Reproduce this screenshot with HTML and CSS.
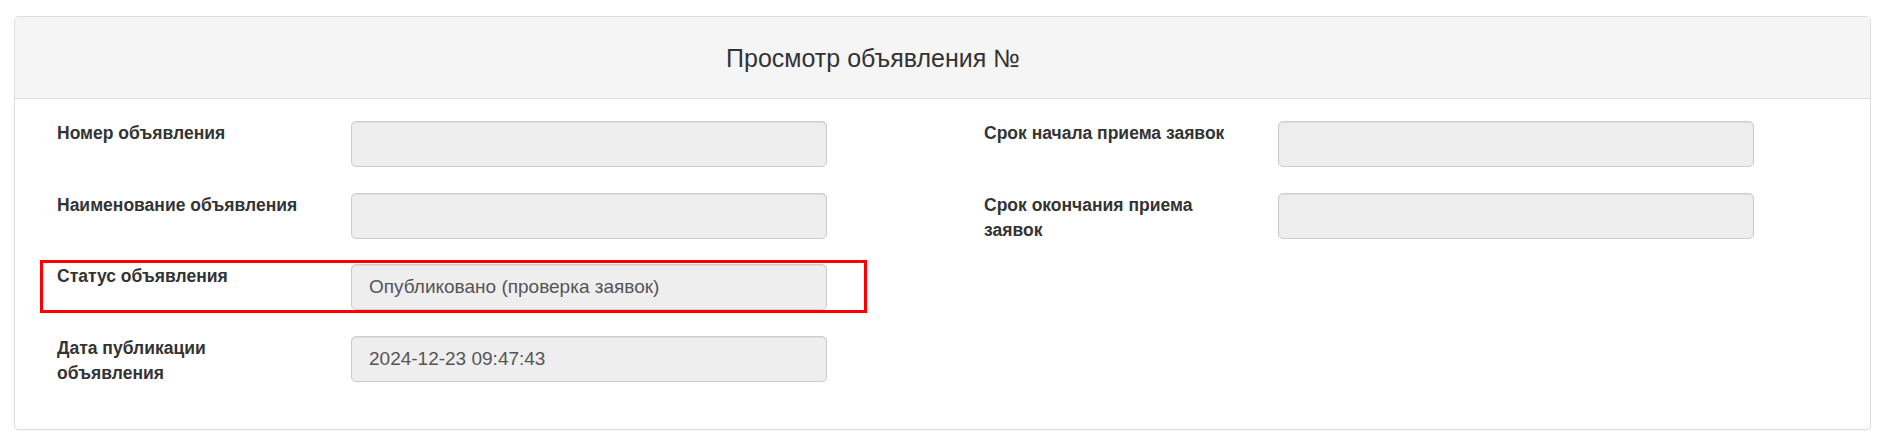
FILE: index.html
```html
<!DOCTYPE html>
<html lang="ru">
<head>
<meta charset="utf-8">
<title>Просмотр объявления</title>
<link rel="stylesheet" href="styles.css">
</head>
<body>
<div class="page">
  <div class="panel">
    <div class="panel-heading">
      <h3 class="panel-title">Просмотр объявления №</h3>
    </div>
    <div class="panel-body">
      <div class="col">
        <div class="form-row">
          <label class="form-label">Номер объявления</label>
          <div class="form-control"></div>
        </div>
        <div class="form-row">
          <label class="form-label">Наименование объявления</label>
          <div class="form-control"></div>
        </div>
        <div class="form-row highlighted">
          <label class="form-label">Статус объявления</label>
          <div class="form-control">Опубликовано (проверка заявок)</div>
        </div>
        <div class="form-row">
          <label class="form-label">Дата публикации объявления</label>
          <div class="form-control">2024-12-23 09:47:43</div>
        </div>
      </div>
      <div class="col">
        <div class="form-row">
          <label class="form-label">Срок начала приема заявок</label>
          <div class="form-control"></div>
        </div>
        <div class="form-row">
          <label class="form-label">Срок окончания приема заявок</label>
          <div class="form-control"></div>
        </div>
      </div>
    </div>
  </div>
</div>
</body>
</html>
```

FILE: styles.css
```css
html, body {
  margin: 0;
  padding: 0;
  background: #fff;
}

body {
  font-family: "Liberation Sans", Arial, Helvetica, sans-serif;
  color: #333;
}

.page {
  padding: 16px 16px 19px 14px;
}

.panel {
  border: 1px solid #ddd;
  border-radius: 5px;
  box-shadow: 0 1px 1px rgba(0, 0, 0, 0.05);
  background: #fff;
}

.panel-heading {
  height: 82px;
  background: #f5f5f5;
  border-bottom: 1px solid #ddd;
  border-radius: 4px 4px 0 0;
  display: flex;
  align-items: center;
  justify-content: center;
  padding-right: 139px;
  padding-top: 2px;
  box-sizing: border-box;
}

.panel-title {
  margin: 0;
  font-size: 25px;
  font-weight: normal;
  line-height: 1.1;
  color: #333;
}

.panel-body {
  display: grid;
  grid-template-columns: 927px 927px;
  padding: 22px 0 43px 42px;
  align-items: start;
}

.form-row {
  display: flex;
  align-items: flex-start;
  margin-bottom: 25.5px;
}

.col .form-row:last-child {
  margin-bottom: 0;
}

.form-label {
  width: 256px;
  margin-right: 38px;
  font-size: 17.5px;
  font-weight: bold;
  line-height: 25px;
}

.form-control {
  width: 476px;
  height: 46px;
  box-sizing: border-box;
  background: #eee;
  border: 1px solid #ccc;
  border-radius: 5px;
  box-shadow: inset 0 1px 1px rgba(0, 0, 0, 0.075);
  padding: 0 17px;
  font-size: 19px;
  line-height: 44px;
  color: #555;
}

.highlighted {
  position: relative;
}

.highlighted::after {
  content: "";
  position: absolute;
  left: -17px;
  top: -4px;
  width: 827px;
  height: 53px;
  box-sizing: border-box;
  border: 3px solid #f00;
  pointer-events: none;
}
```
